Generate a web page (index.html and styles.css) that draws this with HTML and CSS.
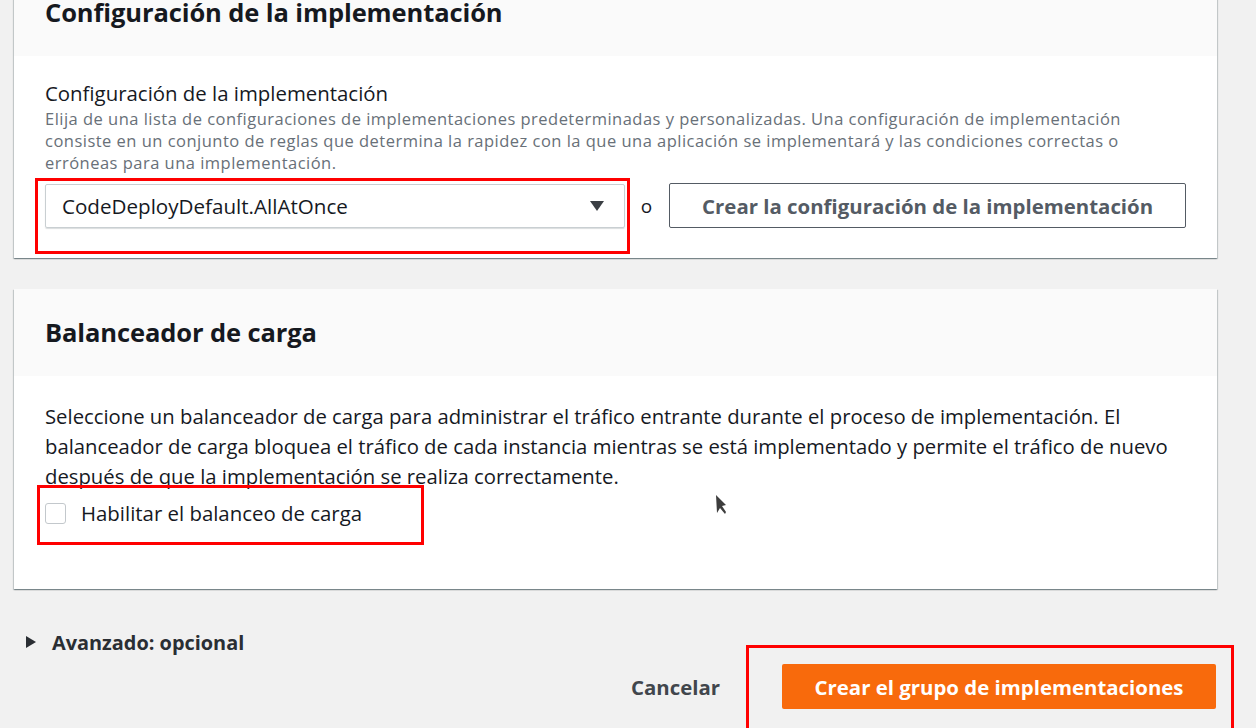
FILE: index.html
```html
<!DOCTYPE html>
<html lang="es">
<head>
<meta charset="utf-8">
<title>Crear grupo de implementaciones</title>
<link rel="stylesheet" href="styles.css">
</head>
<body>
<div class="page">
  <section class="card card-first">
    <header class="card-header"><h2 class="card-title">Configuración de la implementación</h2></header>
    <div class="card-body body-config">
      <div class="field-label">Configuración de la implementación</div>
      <p class="field-desc">Elija de una lista de configuraciones de implementaciones predeterminadas y personalizadas. Una configuración de implementación consiste en un conjunto de reglas que determina la rapidez con la que una aplicación se implementará y las condiciones correctas o erróneas para una implementación.</p>
      <div class="select-row">
        <div class="select">
          <span class="select-value">CodeDeployDefault.AllAtOnce</span>
          <svg class="select-caret" width="16" height="12" viewBox="0 0 16 12"><path d="M1 1h14L8 11z" fill="#3b3f44"/></svg>
        </div>
        <span class="or">o</span>
        <button class="btn btn-normal">Crear la configuración de la implementación</button>
      </div>
    </div>
  </section>

  <section class="card card-second">
    <header class="card-header"><h2 class="card-title">Balanceador de carga</h2></header>
    <div class="card-body body-lb">
      <p class="lb-text">Seleccione un balanceador de carga para administrar el tráfico entrante durante el proceso de implementación. El balanceador de carga bloquea el tráfico de cada instancia mientras se está implementado y permite el tráfico de nuevo después de que la implementación se realiza correctamente.</p>
      <label class="check-row"><span class="checkbox"></span><span class="check-label">Habilitar el balanceo de carga</span></label>
    </div>
  </section>

  <div class="expander">
    <svg class="exp-caret" width="12" height="14" viewBox="0 0 12 14"><path d="M1 1l10 6-10 6z" fill="#2a2e33"/></svg>
    <span>Avanzado: opcional</span>
  </div>

  <div class="actions">
    <button class="btn btn-link">Cancelar</button>
    <button class="btn btn-primary">Crear el grupo de implementaciones</button>
  </div>

  <div class="mark mark-select"></div>
  <div class="mark mark-check"></div>
  <div class="mark mark-submit"></div>
  <svg class="cursor" width="14" height="26" viewBox="0 0 14 26"><path d="M2 2 L3 20 L6 15 L11 21 L12 19 L8 13 L12 12 Z" fill="#1b1b1b" opacity="0.85"/></svg>
</div>
</body>
</html>
```
FILE: styles.css
```css
* { box-sizing: border-box; }
html, body { margin: 0; padding: 0; }
body {
  background: #f1f1f1;
  font-family: "Open Sans", "Noto Sans", sans-serif;
  color: #16191f;
  width: 1256px;
  height: 728px;
  overflow: hidden;
}
.page {
  position: relative;
  display: flow-root;
  width: 1256px;
  height: 728px;
  padding: 0 39px 0 14px;
}
.card {
  background: #fff;
  box-shadow: 0 1px 1px 0 rgba(0, 28, 36, 0.3), 1px 1px 1px 0 rgba(0, 28, 36, 0.15), -1px 1px 1px 0 rgba(0, 28, 36, 0.15);
}
.card-first { margin-top: -31px; }
.card-second { margin-top: 31px; }
.card-header {
  background: #fafafa;
  padding: 28px 31px 29px;
}
.card-title {
  margin: 0;
  font-size: 25.5px;
  line-height: 30px;
  font-weight: 700;
  letter-spacing: -0.1px;
}
.card-body { padding: 0 31px; }
.body-config { padding-top: 24px; padding-bottom: 30px; }
.field-label { font-size: 20.4px; line-height: 26px; }
.field-desc {
  margin: 2px 0 0;
  font-size: 16.5px;
  letter-spacing: 0.48px;
  line-height: 22px;
  color: #687078;
}
.select-row {
  display: flex;
  align-items: center;
  margin-top: 9px;
}
.select {
  width: 580px;
  height: 44px;
  border: 1px solid #c9cfd2;
  border-radius: 2px;
  box-shadow: 0 1px 1px rgba(0, 28, 36, 0.15);
  display: flex;
  align-items: center;
  justify-content: space-between;
  padding: 0 19px 0 16px;
  font-size: 20.6px;
}
.or { margin: 0 17px 0 16px; font-size: 19px; }
.btn {
  font-family: inherit;
  font-weight: 700;
  font-size: 20.4px;
  cursor: pointer;
}
.btn-normal {
  height: 45px;
  width: 517px;
  background: #fff;
  border: 1px solid #545b64;
  border-radius: 2px;
  color: #545b64;
  padding: 0;
}
.body-lb { padding-top: 25px; padding-bottom: 64px; }
.lb-text {
  margin: 0;
  font-size: 20.3px;
  line-height: 30px;
}
.check-row {
  display: flex;
  align-items: center;
  height: 24px;
  margin-top: 10px;
  font-size: 20.4px;
}
.checkbox {
  width: 21px;
  height: 21px;
  border: 1px solid #c3c8cc;
  border-radius: 3px;
  background: #fff;
  margin-right: 15px;
}
.expander {
  display: flex;
  align-items: center;
  margin: 41px 0 0 11px;
  height: 24px;
  font-size: 19.9px;
  font-weight: 700;
  color: #2a2e33;
}
.exp-caret { margin-right: 15px; }
.actions {
  display: flex;
  justify-content: flex-end;
  align-items: center;
  margin-top: 10px;
}
.btn-link {
  background: none;
  border: none;
  color: #41464c;
  padding: 0;
  margin-right: 62px;
  height: 45px;
}
.btn-primary {
  width: 434px;
  height: 45px;
  border: none;
  border-radius: 2px;
  background: #f86a0c;
  color: #fff;
  margin-right: 1px;
  padding: 0;
}
.mark {
  position: absolute;
  border: 3px solid #f00;
}
.mark-select { left: 35px; top: 178px; width: 595px; height: 76px; }
.mark-check { left: 37px; top: 485px; width: 387px; height: 60px; }
.mark-submit { left: 746px; top: 645px; width: 488px; height: 100px; }
.cursor { position: absolute; left: 714px; top: 493px; }
```
